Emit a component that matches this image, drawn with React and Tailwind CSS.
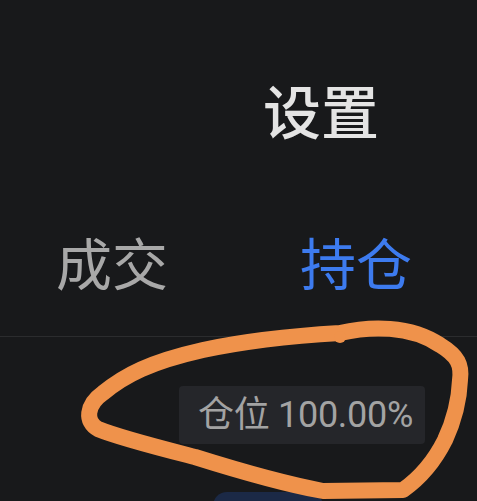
export default function App() {
  return (
    <div className="relative w-[477px] h-[501px] overflow-hidden bg-[#18191b] font-['Noto_Sans_CJK_SC',sans-serif]">
      <div className="pt-[71px] pl-[263px] text-[58px] leading-[76px] font-medium text-[#e4e4e4]">设置</div>

      <div className="mt-[76px] flex text-[56px] leading-[76px]">
        <div className="pl-[56px] text-[#a8a8a8]">成交</div>
        <div className="pl-[132px] text-[#3d7bef]">持仓</div>
      </div>

      <div className="mt-[37px] h-px bg-[#2b2c2e]" />

      <div className="mt-[49px] flex justify-end pr-[52px]">
        <div className="flex h-[58px] w-[246px] items-center rounded-[4px] bg-[#25262a] pl-[19px] text-[36px] tracking-[-0.3px] text-[#a3a3a3] font-['Roboto','Noto_Sans_CJK_SC',sans-serif]">
          仓位 100.00%
        </div>
      </div>

      <div className="mt-[48px] ml-[213px] h-[20px] w-[110px] rounded-t-[14px] bg-[#1b2946]" />

      {/* hand-drawn highlight */}
      <svg className="absolute inset-0" width="477" height="501" viewBox="0 0 477 501" fill="none">
        <path
          d="M 340 333 C 370 326, 410 325, 440 345 C 458 356, 462 365, 460 380 C 459 405, 452 425, 445 440 C 435 460, 420 478, 403 490 L 323 491 C 280 483, 230 468, 195 457 C 160 448, 120 438, 98 429 C 85 422, 86 405, 103 393 C 125 375, 150 362, 203 350 C 240 342, 290 336, 340 333"
          stroke="#ef924b"
          strokeWidth="16"
          strokeLinecap="round"
          strokeLinejoin="round"
        />
        <circle cx="340" cy="337" r="6" fill="#ef924b" />
      </svg>
    </div>
  );
}
